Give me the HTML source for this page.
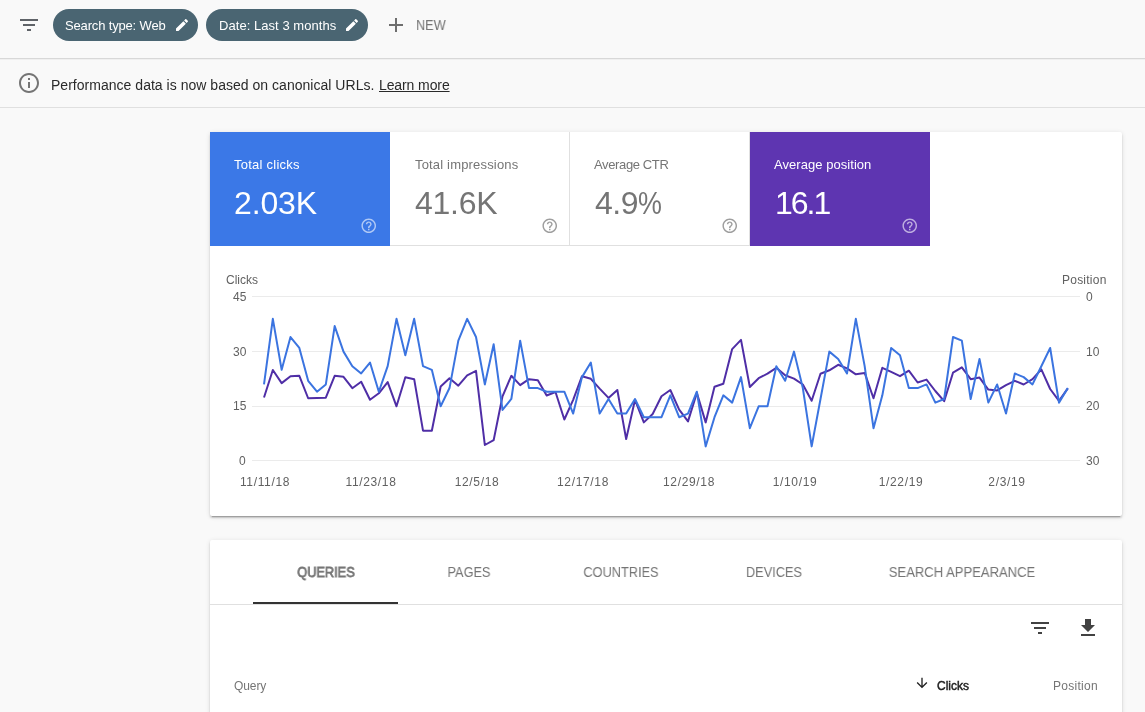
<!DOCTYPE html>
<html lang="en"><head><meta charset="utf-8"><title>Performance</title>
<style>
html,body{margin:0;padding:0}
body{width:1145px;height:712px;overflow:hidden;background:#f9f9f9;position:relative;font-family:"Liberation Sans",Arial,sans-serif}
.t{position:absolute;white-space:nowrap;margin:0;padding:0;will-change:transform}
.abs{position:absolute}
.line{position:absolute;left:0;width:1145px;height:1px;background:#dcdcdc}
.chip{position:absolute;top:9px;height:32px;border-radius:16px;background:#4a6572}
.card{position:absolute;border-radius:2px;left:210px;width:912px;background:#fff;box-shadow:0 2px 2px 0 rgba(0,0,0,.14),0 3px 1px -2px rgba(0,0,0,.2),0 1px 5px 0 rgba(0,0,0,.12)}
.tile{position:absolute;top:132px;width:180px;height:114px;box-sizing:border-box}
svg{position:absolute;overflow:visible}
</style></head><body>
<div class="line" style="top:58px;background:#d8d8d8"></div>
<div class="line" style="top:59px;background:#f0f0f0"></div>
<div class="line" style="top:107px;background:#e0e0e0"></div>
<!-- top filter icon -->
<svg style="left:17px;top:13px" width="24" height="24" viewBox="0 0 24 24"><path fill="#5f6368" d="M10 18h4v-2h-4v2zM3 6v2h18V6H3zm3 7h12v-2H6v2z"/></svg>
<div class="chip" style="left:53px;width:145px"></div>
<div class="chip" style="left:206px;width:162px"></div>
<svg style="left:174.2px;top:17.1px" width="16" height="16" viewBox="0 0 24 24"><path fill="#fff" d="M3 17.25V21h3.75L17.81 9.94l-3.75-3.75L3 17.25zM20.71 7.04c.39-.39.39-1.02 0-1.41l-2.34-2.34c-.39-.39-1.02-.39-1.41 0l-1.83 1.83 3.75 3.75 1.83-1.83z"/></svg>
<svg style="left:344.2px;top:17.1px" width="16" height="16" viewBox="0 0 24 24"><path fill="#fff" d="M3 17.25V21h3.75L17.81 9.94l-3.75-3.75L3 17.25zM20.71 7.04c.39-.39.39-1.02 0-1.41l-2.34-2.34c-.39-.39-1.02-.39-1.41 0l-1.83 1.83 3.75 3.75 1.83-1.83z"/></svg>
<svg style="left:384px;top:13px" width="24" height="24" viewBox="0 0 24 24"><path fill="#6e6e6e" d="M19 13h-6v6h-2v-6H5v-2h6V5h2v6h6v2z"/></svg>
<!-- info icon -->
<svg style="left:17px;top:71px" width="24" height="24" viewBox="0 0 24 24"><path fill="#757575" d="M11 17h2v-6h-2v6zm1-15C6.48 2 2 6.48 2 12s4.48 10 10 10 10-4.480 10-10S17.520 2 12 2zm0 18c-4.410 0-8-3.590-8-8s3.590-8 8-8 8 3.590 8 8-3.590 8-8 8zM11 9h2V7h-2v2z"/></svg>
<!-- card 1 -->
<div class="card" style="top:132px;height:384px"></div>
<div class="tile" style="left:210px;background:#3b78e7"></div>
<div class="tile" style="left:390px;border-right:1px solid #e0e0e0;border-bottom:1px solid #e0e0e0"></div>
<div class="tile" style="left:570px;border-right:1px solid #e0e0e0;border-bottom:1px solid #e0e0e0"></div>
<div class="tile" style="left:750px;background:#5e35b1"></div>
<svg style="left:360.4px;top:217.2px" width="17.5" height="17.5" viewBox="0 0 24 24"><path fill="rgba(255,255,255,.6)" d="M11 18h2v-2h-2v2zm1-16C6.480 2 2 6.480 2 12s4.480 10 10 10 10-4.480 10-10S17.520 2 12 2zm0 18c-4.410 0-8-3.590-8-8s3.590-8 8-8 8 3.590 8 8-3.590 8-8 8zm0-14c-2.210 0-4 1.790-4 4h2c0-1.100.9-2 2-2s2 .9 2 2c0 2-3 1.750-3 5h2c0-2.250 3-2.500 3-5 0-2.210-1.790-4-4-4z"/></svg>
<svg style="left:540.5px;top:217.2px" width="17.5" height="17.5" viewBox="0 0 24 24"><path fill="#9e9e9e" d="M11 18h2v-2h-2v2zm1-16C6.480 2 2 6.480 2 12s4.480 10 10 10 10-4.480 10-10S17.520 2 12 2zm0 18c-4.410 0-8-3.590-8-8s3.590-8 8-8 8 3.590 8 8-3.590 8-8 8zm0-14c-2.210 0-4 1.790-4 4h2c0-1.100.9-2 2-2s2 .9 2 2c0 2-3 1.750-3 5h2c0-2.250 3-2.500 3-5 0-2.210-1.790-4-4-4z"/></svg>
<svg style="left:720.5px;top:217.2px" width="17.5" height="17.5" viewBox="0 0 24 24"><path fill="#9e9e9e" d="M11 18h2v-2h-2v2zm1-16C6.480 2 2 6.480 2 12s4.480 10 10 10 10-4.480 10-10S17.520 2 12 2zm0 18c-4.410 0-8-3.590-8-8s3.590-8 8-8 8 3.590 8 8-3.590 8-8 8zm0-14c-2.210 0-4 1.790-4 4h2c0-1.100.9-2 2-2s2 .9 2 2c0 2-3 1.750-3 5h2c0-2.250 3-2.500 3-5 0-2.210-1.790-4-4-4z"/></svg>
<svg style="left:900.5px;top:217.2px" width="17.5" height="17.5" viewBox="0 0 24 24"><path fill="rgba(255,255,255,.6)" d="M11 18h2v-2h-2v2zm1-16C6.480 2 2 6.480 2 12s4.480 10 10 10 10-4.480 10-10S17.520 2 12 2zm0 18c-4.410 0-8-3.590-8-8s3.590-8 8-8 8 3.590 8 8-3.590 8-8 8zm0-14c-2.210 0-4 1.790-4 4h2c0-1.100.9-2 2-2s2 .9 2 2c0 2-3 1.750-3 5h2c0-2.250 3-2.500 3-5 0-2.210-1.790-4-4-4z"/></svg>

<!-- chart -->
<svg style="left:0;top:0" width="1145" height="712" viewBox="0 0 1145 712">
<g stroke="#ebebeb" stroke-width="1" shape-rendering="crispEdges">
<line x1="252" x2="1080" y1="296.5" y2="296.5"/>
<line x1="252" x2="1080" y1="351.5" y2="351.5"/>
<line x1="252" x2="1080" y1="406.5" y2="406.5"/>
<line x1="252" x2="1080" y1="460.5" y2="460.5"/>
</g>
<polyline fill="none" stroke="#4f2ea6" stroke-width="2" stroke-linejoin="round" points="264.00,397.50 272.83,369.95 281.67,383.10 290.50,376.20 299.33,375.80 308.17,398.25 317.00,397.90 325.83,397.70 334.67,375.80 343.50,376.80 352.33,388.20 361.17,381.70 370.00,399.80 378.83,393.30 387.67,382.10 396.50,406.30 405.33,377.20 414.17,379.20 423.00,430.70 431.83,430.70 440.67,386.50 449.50,378.20 458.33,385.70 467.17,375.30 476.00,370.90 484.83,445.00 493.67,440.10 502.50,396.30 511.33,375.80 520.17,385.10 529.00,379.20 537.83,380.20 546.67,395.50 555.50,392.00 564.33,419.50 573.17,399.80 582.00,376.20 590.83,378.80 599.67,388.60 608.50,397.90 617.33,390.00 626.17,439.10 635.00,399.80 643.83,422.40 652.67,414.00 661.50,396.30 670.33,390.00 679.17,409.65 688.00,421.40 696.83,392.90 705.66,422.40 714.50,386.70 723.33,383.70 732.16,349.10 741.00,339.90 749.83,387.05 758.66,378.20 767.50,373.70 776.33,367.80 785.16,375.30 794.00,378.60 802.83,384.50 811.66,400.80 820.50,373.70 829.33,370.30 838.16,364.80 847.00,368.40 855.83,374.30 864.66,372.90 873.50,398.25 882.33,367.80 891.16,371.90 900.00,376.20 908.83,370.70 917.66,382.50 926.50,379.60 935.33,391.00 944.16,401.20 953.00,372.70 961.83,367.40 970.66,379.20 979.50,377.60 988.33,389.60 997.16,390.40 1006.00,385.10 1014.83,380.80 1023.66,384.50 1032.50,379.20 1041.33,369.40 1050.16,389.00 1059.00,400.80 1067.83,388.40"/>
<polyline fill="none" stroke="#3b74e0" stroke-width="2" stroke-linejoin="round" points="264.00,384.42 272.83,318.82 281.67,369.84 290.50,337.04 299.33,347.97 308.17,380.77 317.00,391.71 325.83,384.42 334.67,326.11 343.50,351.62 352.33,366.19 361.17,373.48 370.00,362.55 378.83,391.71 387.67,366.19 396.50,318.82 405.33,355.26 414.17,318.82 423.00,366.19 431.83,369.84 440.67,406.28 449.50,388.06 458.33,340.68 467.17,318.82 476.00,337.04 484.83,384.42 493.67,344.33 502.50,409.93 511.33,398.99 520.17,340.68 529.00,388.06 537.83,388.06 546.67,391.71 555.50,391.71 564.33,391.71 573.17,413.57 582.00,377.13 590.83,362.55 599.67,413.57 608.50,398.99 617.33,413.57 626.17,413.57 635.00,398.99 643.83,417.22 652.67,417.22 661.50,417.22 670.33,395.35 679.17,417.22 688.00,413.57 696.83,391.71 705.66,446.37 714.50,417.22 723.33,395.35 732.16,402.64 741.00,377.13 749.83,428.15 758.66,406.28 767.50,406.28 776.33,366.19 785.16,380.77 794.00,351.62 802.83,388.06 811.66,446.37 820.50,398.99 829.33,351.62 838.16,358.91 847.00,373.48 855.83,318.82 864.66,366.19 873.50,428.15 882.33,395.35 891.16,347.97 900.00,355.26 908.83,388.06 917.66,388.06 926.50,384.42 935.33,402.64 944.16,398.99 953.00,337.04 961.83,340.68 970.66,398.99 979.50,358.91 988.33,402.64 997.16,384.42 1006.00,413.57 1014.83,373.48 1023.66,377.13 1032.50,384.42 1041.33,366.19 1050.16,347.97 1059.00,402.64 1067.83,388.06"/>
</svg>
<!-- card 2 -->
<div class="card" style="top:540px;height:200px"></div>
<div class="abs" style="left:210px;top:604px;width:912px;height:1px;background:#e0e0e0"></div>
<div class="abs" style="left:253px;top:602px;width:145px;height:2px;background:#333"></div>
<svg style="left:1028px;top:616px" width="24" height="24" viewBox="0 0 24 24"><path fill="#424242" d="M10 18h4v-2h-4v2zM3 6v2h18V6H3zm3 7h12v-2H6v2z"/></svg>
<svg style="left:1076px;top:616px" width="24" height="24" viewBox="0 0 24 24"><path fill="#424242" d="M19 9h-4V3H9v6H5l7 7 7-7zM5 18v2h14v-2H5z"/></svg>
<svg style="left:914px;top:675px" width="16" height="16" viewBox="0 0 24 24"><path fill="#212121" d="M20 12l-1.410-1.410L13 16.170V4h-2v12.170l-5.580-5.590L4 12l8 8 8-8z"/></svg>
<div class="t chip1" style="left:65.30px;top:16.60px;font-size:13px;line-height:18px;color:#fff;font-weight:400;letter-spacing:-0.16px;">Search type: Web</div>
<div class="t chip2" style="left:218.50px;top:16.60px;font-size:13px;line-height:18px;color:#fff;font-weight:400;letter-spacing:0.05px;">Date: Last 3 months</div>
<div class="t new" style="left:416.00px;top:15.25px;font-size:14px;line-height:20px;color:#757575;font-weight:400;letter-spacing:0px;transform:scaleX(.91);transform-origin:0 50%">NEW</div>
<div class="t info" style="left:51.40px;top:74.95px;font-size:14px;line-height:20px;color:#2a2a2a;font-weight:400;letter-spacing:0.025px;">Performance data is now based on canonical URLs.</div>
<div class="t learn" style="left:379.00px;top:74.95px;font-size:14px;line-height:20px;color:#2a2a2a;font-weight:400;letter-spacing:-0.1px;text-decoration:underline">Learn more</div>
<div class="t l1" style="left:234.20px;top:156.10px;font-size:13px;line-height:18px;color:#fff;font-weight:400;letter-spacing:0.24px;">Total clicks</div>
<div class="t l2" style="left:414.50px;top:156.10px;font-size:13px;line-height:18px;color:#757575;font-weight:400;letter-spacing:0.175px;">Total impressions</div>
<div class="t l3" style="left:594.30px;top:156.10px;font-size:13px;line-height:18px;color:#757575;font-weight:400;letter-spacing:-0.37px;">Average CTR</div>
<div class="t l4" style="left:774.30px;top:156.10px;font-size:13px;line-height:18px;color:#fff;font-weight:400;letter-spacing:0.05px;">Average position</div>
<div class="t n1" style="left:233.70px;top:180.71px;font-size:32px;line-height:45px;color:#fff;font-weight:400;letter-spacing:-0.12px;">2.03K</div>
<div class="t n2" style="left:414.50px;top:180.71px;font-size:32px;line-height:45px;color:#757575;font-weight:400;letter-spacing:-0.27px;">41.6K</div>
<div class="t n3" style="left:594.50px;top:180.71px;font-size:32px;line-height:45px;color:#757575;font-weight:400;letter-spacing:-0.5px;">4.9<span style="display:inline-block;transform:scaleX(.84);transform-origin:0 50%">%</span></div>
<div class="t n4" style="left:775.00px;top:180.71px;font-size:32px;line-height:45px;color:#fff;font-weight:400;letter-spacing:-2px;">16.1</div>
<div class="t cl" style="left:226.20px;top:271.94px;font-size:12px;line-height:17px;color:#616161;font-weight:400;letter-spacing:0px;">Clicks</div>
<div class="t po" style="left:1061.50px;top:271.94px;font-size:12px;line-height:17px;color:#616161;font-weight:400;letter-spacing:0.23px;">Position</div>
<div class="t yl0" style="right:899.00px;top:289.04px;font-size:12px;line-height:17px;color:#616161;font-weight:400;letter-spacing:0px;">45</div>
<div class="t yr0" style="left:1086.30px;top:289.04px;font-size:12px;line-height:17px;color:#616161;font-weight:400;letter-spacing:0px;">0</div>
<div class="t yl1" style="right:899.00px;top:343.71px;font-size:12px;line-height:17px;color:#616161;font-weight:400;letter-spacing:0px;">30</div>
<div class="t yr1" style="left:1086.30px;top:343.71px;font-size:12px;line-height:17px;color:#616161;font-weight:400;letter-spacing:0px;">10</div>
<div class="t yl2" style="right:899.00px;top:398.37px;font-size:12px;line-height:17px;color:#616161;font-weight:400;letter-spacing:0px;">15</div>
<div class="t yr2" style="left:1086.30px;top:398.37px;font-size:12px;line-height:17px;color:#616161;font-weight:400;letter-spacing:0px;">20</div>
<div class="t yl3" style="right:899.00px;top:453.04px;font-size:12px;line-height:17px;color:#616161;font-weight:400;letter-spacing:0px;">0</div>
<div class="t yr3" style="left:1086.30px;top:453.04px;font-size:12px;line-height:17px;color:#616161;font-weight:400;letter-spacing:0px;">30</div>
<div class="t xl0" style="left:264.60px;transform:translateX(-50%);top:474.24px;font-size:12px;line-height:17px;color:#616161;font-weight:400;letter-spacing:0.65px;">11/11/18</div>
<div class="t xl1" style="left:370.60px;transform:translateX(-50%);top:474.24px;font-size:12px;line-height:17px;color:#616161;font-weight:400;letter-spacing:0.65px;">11/23/18</div>
<div class="t xl2" style="left:476.60px;transform:translateX(-50%);top:474.24px;font-size:12px;line-height:17px;color:#616161;font-weight:400;letter-spacing:0.65px;">12/5/18</div>
<div class="t xl3" style="left:582.60px;transform:translateX(-50%);top:474.24px;font-size:12px;line-height:17px;color:#616161;font-weight:400;letter-spacing:0.65px;">12/17/18</div>
<div class="t xl4" style="left:688.60px;transform:translateX(-50%);top:474.24px;font-size:12px;line-height:17px;color:#616161;font-weight:400;letter-spacing:0.65px;">12/29/18</div>
<div class="t xl5" style="left:794.60px;transform:translateX(-50%);top:474.24px;font-size:12px;line-height:17px;color:#616161;font-weight:400;letter-spacing:0.65px;">1/10/19</div>
<div class="t xl6" style="left:900.60px;transform:translateX(-50%);top:474.24px;font-size:12px;line-height:17px;color:#616161;font-weight:400;letter-spacing:0.65px;">1/22/19</div>
<div class="t xl7" style="left:1006.60px;transform:translateX(-50%);top:474.24px;font-size:12px;line-height:17px;color:#616161;font-weight:400;letter-spacing:0.65px;">2/3/19</div>
<div class="t tab0" style="left:325.50px;transform:translateX(-50%);top:562.15px;font-size:14px;line-height:20px;color:#757575;font-weight:400;letter-spacing:0px;transform:translateX(-50%) scaleX(.912);-webkit-text-stroke:.8px #757575;">QUERIES</div>
<div class="t tab1" style="left:468.70px;transform:translateX(-50%);top:562.15px;font-size:14px;line-height:20px;color:#757575;font-weight:400;letter-spacing:0px;transform:translateX(-50%) scaleX(.912);">PAGES</div>
<div class="t tab2" style="left:621.10px;transform:translateX(-50%);top:562.15px;font-size:14px;line-height:20px;color:#757575;font-weight:400;letter-spacing:0px;transform:translateX(-50%) scaleX(.912);">COUNTRIES</div>
<div class="t tab3" style="left:773.60px;transform:translateX(-50%);top:562.15px;font-size:14px;line-height:20px;color:#757575;font-weight:400;letter-spacing:0px;transform:translateX(-50%) scaleX(.912);">DEVICES</div>
<div class="t tab4" style="left:961.70px;transform:translateX(-50%);top:562.15px;font-size:14px;line-height:20px;color:#757575;font-weight:400;letter-spacing:0px;transform:translateX(-50%) scaleX(.932);">SEARCH APPEARANCE</div>
<div class="t q" style="left:234.00px;top:677.84px;font-size:12px;line-height:17px;color:#757575;font-weight:400;letter-spacing:-0.1px;">Query</div>
<div class="t ck" style="right:176.20px;top:677.84px;font-size:12px;line-height:17px;color:#212121;font-weight:400;letter-spacing:0px;-webkit-text-stroke:.45px #212121;">Clicks</div>
<div class="t ps" style="right:47.00px;top:677.84px;font-size:12px;line-height:17px;color:#757575;font-weight:400;letter-spacing:0.28px;">Position</div>
</body></html>
